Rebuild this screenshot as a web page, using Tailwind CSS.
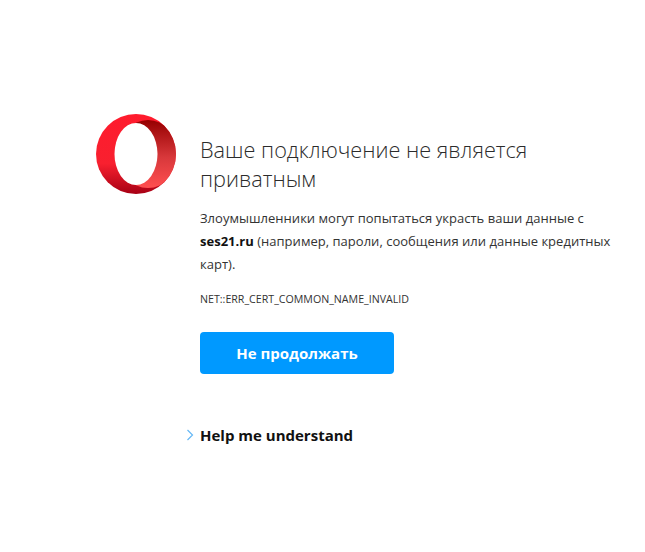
<!DOCTYPE html>
<html><head><meta charset="utf-8"><script src="https://cdn.jsdelivr.net/npm/@tailwindcss/browser@4"></script></head>
<body class="bg-white font-['Open_Sans',sans-serif] overflow-hidden">
<main class="w-[645px] h-[552px] pt-[114px] pl-[96px]">
  <div class="flex gap-[24px]">
    <svg class="w-20 h-20 shrink-0" viewBox="0 0 80 80">
      <defs>
        <linearGradient id="a" x1="0" y1="0" x2="0" y2="1"><stop offset="0" stop-color="#ff1b2d"/><stop offset=".62" stop-color="#f8202f"/><stop offset="1" stop-color="#a70014"/></linearGradient>
        <linearGradient id="b" x1="0" y1="0" x2="0" y2="1"><stop offset="0" stop-color="#960000"/><stop offset=".55" stop-color="#d8383b"/><stop offset="1" stop-color="#ff4f50"/></linearGradient>
        <clipPath id="c"><circle cx="40" cy="40" r="40"/></clipPath>
      </defs>
      <circle cx="40" cy="40" r="40" fill="url(#a)"/>
      <ellipse cx="52" cy="40" rx="30" ry="34" fill="url(#b)" clip-path="url(#c)"/>
      <ellipse cx="40" cy="40" rx="21.500" ry="31" fill="#fff"/>
    </svg>
    <div class="w-[420px] pt-[21px]">
      <h1 class="text-[21.700px] leading-[29px] font-light text-[#2b2b2b]">Ваше подключение не является приватным</h1>
      <p class="mt-[14px] text-[13px] leading-[23px] text-[#333] tracking-[.02px]">Злоумышленники могут попытаться украсть ваши данные с <b class="font-bold text-[#111]">ses21.ru</b> (например, пароли, сообщения или данные кредитных карт).</p>
      <p class="mt-[11px] text-[10.650px] leading-[24px] text-[#333]">NET::ERR_CERT_COMMON_NAME_INVALID</p>
      <button class="mt-[21px] w-[194px] h-[42px] rounded-[4px] bg-[#0099ff] text-white text-[15px] font-bold">Не продолжать</button>
    </div>
  </div>
  <div class="mt-[50px] ml-[90px] flex items-center gap-[6px]">
    <svg class="w-2 h-3" viewBox="0 0 8 12" fill="none" stroke="#66b8f5" stroke-width="1.200"><path d="M1.500 1l5 5-5 5"/></svg>
    <span class="text-[15px] leading-[22px] font-bold text-[#111]">Help me understand</span>
  </div>
</main>
</body></html>
